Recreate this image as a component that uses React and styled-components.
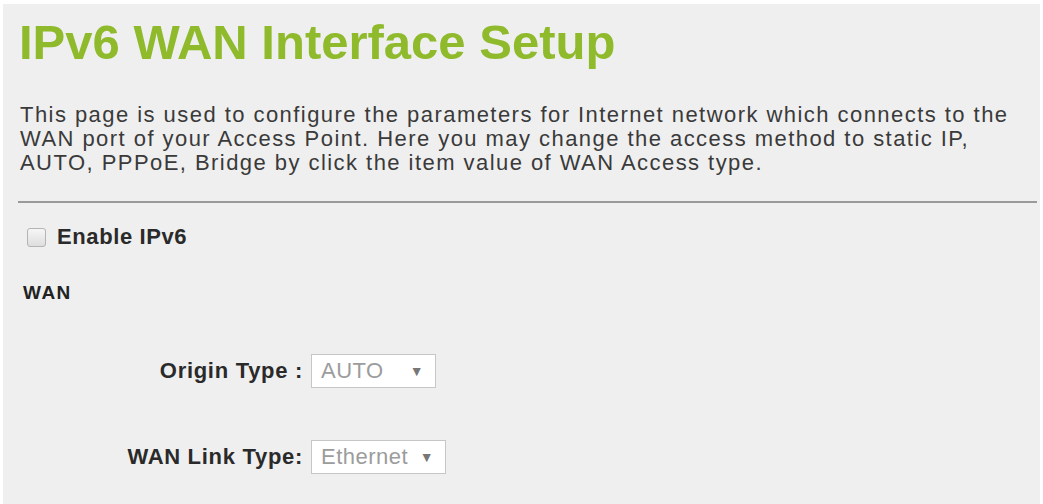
import React from "react";
import styled, { createGlobalStyle } from "styled-components";

const GlobalStyle = createGlobalStyle`
  html, body {
    margin: 0;
    padding: 0;
    background: #ffffff;
  }
  body {
    font-family: "Liberation Sans", Arial, sans-serif;
  }
`;

const Page = styled.div`
  padding: 4px 3px 0 3px;
  height: 504px;
  box-sizing: border-box;
`;

const Panel = styled.div`
  background: #efefef;
  height: 100%;
  padding: 10px 3px 0 15px;
  box-sizing: border-box;
`;

const Title = styled.h1`
  margin: 0 0 0 1px;
  font-size: 49px;
  line-height: 56px;
  font-weight: bold;
  color: #8fba2c;
`;

const Intro = styled.p`
  margin: 33px 0 0 2px;
  font-size: 22px;
  line-height: 24px;
  letter-spacing: 1.45px;
  color: #3a3a3a;
`;

const Rule = styled.hr`
  margin: 26px 0 0 0;
  border: none;
  border-top: 2px solid #9a9a9a;
  height: 0;
`;

const CheckRow = styled.label`
  display: flex;
  align-items: center;
  gap: 11px;
  margin: 21px 0 0 9px;
  font-size: 22px;
  letter-spacing: 0.6px;
  font-weight: bold;
  color: #2a2a2a;
`;

const Box = styled.span`
  width: 19px;
  height: 19px;
  border: 1px solid #b4b4b4;
  border-radius: 3px;
  background: linear-gradient(#f6f6f6, #dedede);
  box-sizing: border-box;
`;

const Section = styled.div`
  margin: 32px 0 0 5px;
  font-size: 19px;
  letter-spacing: 1.5px;
  font-weight: bold;
  color: #222;
`;

const Form = styled.div`
  display: grid;
  grid-template-columns: 285px auto;
  column-gap: 8px;
  row-gap: 52px;
  margin-top: 50px;
  justify-content: start;
  align-items: center;
`;

const Label = styled.div`
  text-align: right;
  font-size: 22px;
  letter-spacing: 0.7px;
  font-weight: bold;
  color: #2a2a2a;
`;

const Select = styled.div`
  display: flex;
  align-items: center;
  justify-content: space-between;
  width: ${(p) => p.$w}px;
  height: 34px;
  box-sizing: border-box;
  padding: 0 11px 0 9px;
  border: 1px solid #c6c6c6;
  background: #ffffff;
  font-size: 22px;
  letter-spacing: 0.5px;
  color: #9c9c9c;
`;

const Arrow = styled.span`
  font-size: 14px;
  color: #777;
`;

export default function App() {
  return (
    <>
      <GlobalStyle />
      <Page>
        <Panel>
          <Title>IPv6 WAN Interface Setup</Title>
          <Intro>
            This page is used to configure the parameters for Internet network which connects to the
            <br />
            WAN port of your Access Point. Here you may change the access method to static IP,
            <br />
            AUTO, PPPoE, Bridge by click the item value of WAN Access type.
          </Intro>
          <Rule />
          <CheckRow>
            <Box />
            Enable IPv6
          </CheckRow>
          <Section>WAN</Section>
          <Form>
            <Label>Origin Type :</Label>
            <Select $w={125}>
              AUTO <Arrow>▼</Arrow>
            </Select>
            <Label>WAN Link Type:</Label>
            <Select $w={135}>
              Ethernet <Arrow>▼</Arrow>
            </Select>
          </Form>
        </Panel>
      </Page>
    </>
  );
}
